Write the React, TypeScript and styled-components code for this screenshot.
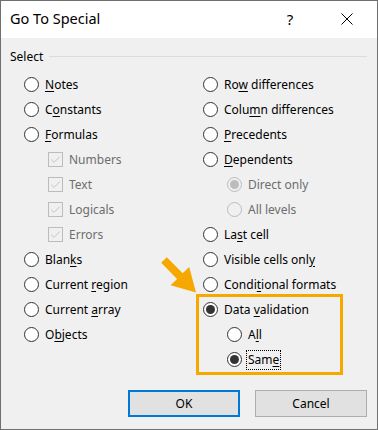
import React from 'react';
import styled, { createGlobalStyle, css } from 'styled-components';

const Global = createGlobalStyle`
  html, body { margin: 0; padding: 0; background: #ffffff; }
  body { font-family: "Noto Sans", "Open Sans", sans-serif; }
`;

const FONT = `"Noto Sans", "Open Sans", "DejaVu Sans", sans-serif`;

const Window = styled.div`
  position: relative;
  width: 378px;
  height: 430px;
  box-sizing: border-box;
  border: 1px solid #6f6f6f;
  background: #f0f0f0;
  display: flex;
  flex-direction: column;
  font-family: ${FONT};
  font-size: 12px;
  color: #000;
`;

const TitleBar = styled.div`
  flex-shrink: 0;
  height: 37px;
  background: #ffffff;
  display: flex;
  align-items: center;
  padding: 0 7px 0 9px;
  gap: 11px;
`;

const Title = styled.div`
  flex: 1;
  font-size: 14.5px;
  line-height: 1;
  padding-bottom: 2px;
`;

const TitleButton = styled.div`
  width: 46px;
  height: 37px;
  display: flex;
  align-items: center;
  justify-content: center;
  font-size: 15px;
  padding-bottom: 2px;
  box-sizing: border-box;
`;

const Body = styled.div`
  flex: 1;
  display: flex;
  flex-direction: column;
  padding: 9px 10px 11px 9px;
`;

const GroupHeader = styled.div`
  height: 18px;
  display: flex;
  align-items: center;
  gap: 6px;
`;

const GroupLine = styled.div`
  flex: 1;
  height: 1px;
  background: #dcdcdc;
`;

const Options = styled.div`
  margin-top: 7px;
  padding-left: 14px;
  display: grid;
  grid-template-columns: 179px 1fr;
  align-items: start;
`;

const Column = styled.div`
  display: flex;
  flex-direction: column;
`;

const Row = styled.div<{ $indent?: boolean }>`
  height: 25px;
  display: flex;
  align-items: center;
  gap: 6px;
  padding-left: ${(p) => (p.$indent ? '24px' : '0')};
`;

const Text = styled.span<{ $disabled?: boolean; $focus?: boolean }>`
  color: ${(p) => (p.$disabled ? '#6d6d6d' : '#000')};
  white-space: nowrap;
  line-height: 16px;
  ${(p) =>
    p.$focus &&
    css`
      outline: 1px dotted #000;
      outline-offset: 1px;
    `}
`;

const Acc = styled.u`
  text-decoration: underline;
  text-underline-offset: 2px;
`;

const RadioCircle = styled.span<{ $disabled?: boolean }>`
  flex-shrink: 0;
  width: 15px;
  height: 15px;
  box-sizing: border-box;
  border-radius: 50%;
  border: 1px solid ${(p) => (p.$disabled ? '#bcbcbc' : '#333333')};
  background: ${(p) => (p.$disabled ? '#f0f0f0' : '#ffffff')};
  display: flex;
  align-items: center;
  justify-content: center;
`;

const RadioDot = styled.span<{ $disabled?: boolean }>`
  width: 9px;
  height: 9px;
  border-radius: 50%;
  background: ${(p) => (p.$disabled ? '#bcbcbc' : '#333333')};
`;

const CheckBox = styled.span`
  flex-shrink: 0;
  width: 15px;
  height: 15px;
  box-sizing: border-box;
  border: 1px solid #bcbcbc;
  background: #f0f0f0;
  display: flex;
  align-items: center;
  justify-content: center;
`;

const Highlight = styled.div`
  width: 147px;
  box-sizing: border-box;
  margin: -3px 0 -4px -7px;
  padding-left: 4px;
  border: 3px solid #f6a800;
  display: flex;
  flex-direction: column;
`;

const Footer = styled.div`
  margin-top: 19px;
  display: flex;
  justify-content: flex-end;
  gap: 15px;
`;

const Button = styled.div<{ $default?: boolean }>`
  width: 112px;
  height: 27px;
  box-sizing: border-box;
  background: #e1e1e1;
  border: ${(p) => (p.$default ? '2px solid #0078d7' : '1px solid #adadad')};
  display: flex;
  align-items: center;
  justify-content: center;
  font-size: 12px;
`;

const ArrowOverlay = styled.svg`
  position: absolute;
  left: 157px;
  top: 253px;
  width: 42px;
  height: 42px;
  pointer-events: none;
`;

const Radio: React.FC<{ checked?: boolean; disabled?: boolean }> = ({ checked, disabled }) => (
  <RadioCircle $disabled={disabled}>{checked && <RadioDot $disabled={disabled} />}</RadioCircle>
);

const Check: React.FC = () => (
  <CheckBox>
    <svg width="13" height="13" viewBox="0 0 13 13">
      <path d="M2.2 6.6 L5 9.4 L10.8 3.6" fill="none" stroke="#c4c4c4" strokeWidth="1" />
    </svg>
  </CheckBox>
);

const CloseIcon: React.FC = () => (
  <svg width="12" height="12" viewBox="0 0 12 12">
    <path d="M0.5 0.5 L11.5 11.5 M11.5 0.5 L0.5 11.5" stroke="#000" strokeWidth="1" fill="none" />
  </svg>
);

export default function App() {
  return (
    <>
      <Global />
      <Window>
        <TitleBar>
          <Title>Go To Special</Title>
          <TitleButton>?</TitleButton>
          <TitleButton>
            <CloseIcon />
          </TitleButton>
        </TitleBar>
        <Body>
          <GroupHeader>
            <span>Select</span>
            <GroupLine />
          </GroupHeader>
          <Options>
            <Column>
              <Row>
                <Radio />
                <Text><Acc>N</Acc>otes</Text>
              </Row>
              <Row>
                <Radio />
                <Text>C<Acc>o</Acc>nstants</Text>
              </Row>
              <Row>
                <Radio />
                <Text><Acc>F</Acc>ormulas</Text>
              </Row>
              <Row $indent>
                <Check />
                <Text $disabled>Numbers</Text>
              </Row>
              <Row $indent>
                <Check />
                <Text $disabled>Text</Text>
              </Row>
              <Row $indent>
                <Check />
                <Text $disabled>Logicals</Text>
              </Row>
              <Row $indent>
                <Check />
                <Text $disabled>Errors</Text>
              </Row>
              <Row>
                <Radio />
                <Text>Blan<Acc>k</Acc>s</Text>
              </Row>
              <Row>
                <Radio />
                <Text>Current <Acc>r</Acc>egion</Text>
              </Row>
              <Row>
                <Radio />
                <Text>Current <Acc>a</Acc>rray</Text>
              </Row>
              <Row>
                <Radio />
                <Text>O<Acc>b</Acc>jects</Text>
              </Row>
            </Column>
            <Column>
              <Row>
                <Radio />
                <Text>Ro<Acc>w</Acc> differences</Text>
              </Row>
              <Row>
                <Radio />
                <Text>Colu<Acc>m</Acc>n differences</Text>
              </Row>
              <Row>
                <Radio />
                <Text><Acc>P</Acc>recedents</Text>
              </Row>
              <Row>
                <Radio />
                <Text><Acc>D</Acc>ependents</Text>
              </Row>
              <Row $indent>
                <Radio checked disabled />
                <Text $disabled>Direct only</Text>
              </Row>
              <Row $indent>
                <Radio disabled />
                <Text $disabled>All levels</Text>
              </Row>
              <Row>
                <Radio />
                <Text>La<Acc>s</Acc>t cell</Text>
              </Row>
              <Row>
                <Radio />
                <Text>Visible cells onl<Acc>y</Acc></Text>
              </Row>
              <Row>
                <Radio />
                <Text>Condi<Acc>t</Acc>ional formats</Text>
              </Row>
              <Highlight>
                <Row>
                  <Radio checked />
                  <Text>Data <Acc>v</Acc>alidation</Text>
                </Row>
                <Row $indent>
                  <Radio />
                  <Text>A<Acc>l</Acc>l</Text>
                </Row>
                <Row $indent>
                  <Radio checked />
                  <Text $focus>Sam<Acc>e</Acc></Text>
                </Row>
              </Highlight>
            </Column>
          </Options>
          <Footer>
            <Button $default>OK</Button>
            <Button>Cancel</Button>
          </Footer>
        </Body>
        <ArrowOverlay viewBox="158 254 42 42">
          <polygon
            points="161.2,262.8 166.8,257.2 182.7,273.3 189.2,267.0 196,292.5 170.6,285.2 177.1,278.9"
            fill="#f6a800"
          />
        </ArrowOverlay>
      </Window>
    </>
  );
}
